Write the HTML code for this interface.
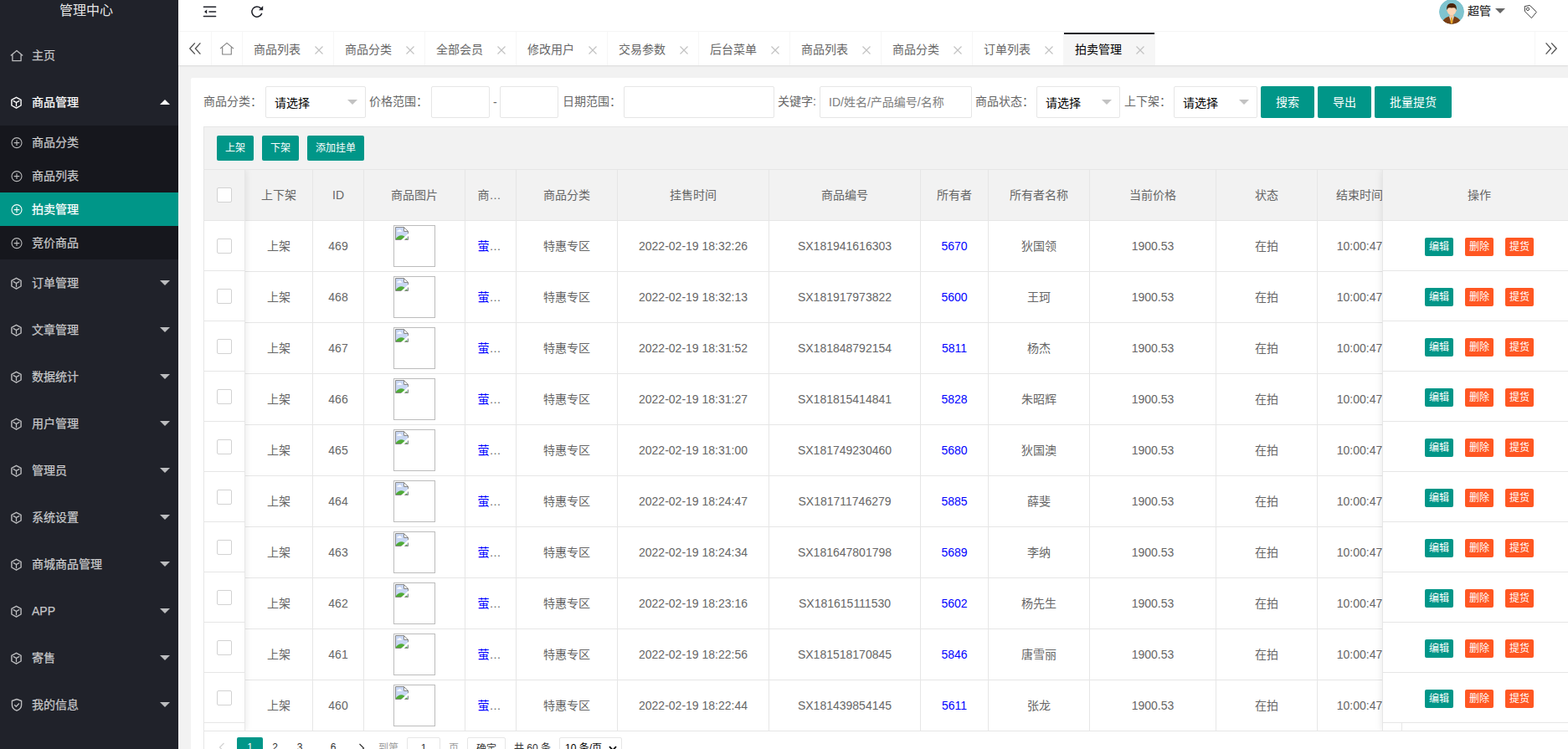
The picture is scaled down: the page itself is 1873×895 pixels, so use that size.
<!DOCTYPE html>
<html lang="zh-CN">
<head>
<meta charset="utf-8">
<title>管理中心</title>
<style>
*{box-sizing:content-box;margin:0;padding:0}
html,body{width:1873px;height:895px;overflow:hidden}
body{position:relative;background:#f2f2f2;font:14px/1 "Liberation Sans","Noto Sans CJK SC",sans-serif;color:#666}
div,span,a,i,label,svg{position:absolute;display:block;white-space:nowrap}
a{text-decoration:none}
i{font-style:normal}
.ic{overflow:visible}
/* card */
.card{left:228px;top:93px;width:1700px;height:900px;background:#fff;border-radius:2px}
.form{left:0;top:103px;width:1873px;height:38px}
.lb{top:0;height:38px;line-height:37px;color:#666}
.in{top:0;height:36px;border:1px solid #e6e6e6;border-radius:2px;background:#fff}
.ph{left:10px;top:0;line-height:36px;color:#7d7d7d}
.sv{left:10px;top:0;line-height:38px;color:#000}
.edge{right:9px;top:15px;width:0;height:0;border:6px solid transparent;border-top-color:#c2c2c2;border-bottom-width:0}
.dash{left:589px;top:0;line-height:39px;color:#666}
.btn{top:0;height:38px;line-height:38px;background:#009688;color:#fff;border-radius:2px;text-align:center}
.tool{left:243px;top:151px;width:1700px;height:50px;border:1px solid #e6e6e6;background:#f2f2f2}
.btn.sm{top:10px;height:30px;line-height:30px;font-size:12px}
/* table */
.tmain{left:244px;top:203px;width:1700px;height:671px;background:#fff;border-bottom:0}
.thead{left:0;top:0;width:1700px;height:60px;background:#f2f2f2;border-bottom:1px solid #e6e6e6}
.th{top:0;height:60px;border-right:1px solid #e6e6e6;line-height:60px;text-align:center;color:#666}
.th span,.td span,.td a{position:static;display:inline}
.tr{left:0;width:1700px;height:60px;border-bottom:1px solid #e6e6e6}
.td{top:0;height:60px;border-right:1px solid #e6e6e6;line-height:60px;text-align:center;color:#666}
.td .img{position:absolute;display:block;left:35px;top:5px;width:48px;height:48px;border:1px solid #bcbcbc}
.td .img svg{left:1px;top:1px}
.lk{color:#0000ff}
.fixl{left:244px;top:203px;width:48px;height:671px;border-right:1px solid #e6e6e6;background:#fff;box-shadow:1px 0 8px rgba(0,0,0,.08);clip-path:inset(0 -12px 0 0)}
.view{left:243px;top:151px;width:1px;height:760px;background:#e6e6e6}
.fixr{left:1651px;top:203px;width:240px;height:671px;border-left:1px solid #e6e6e6;background:transparent;box-shadow:-1px 0 8px rgba(0,0,0,.08);clip-path:inset(0 0 0 -12px)}
.fh{left:0;top:0;width:100%;height:60px;background:#f2f2f2;border-bottom:1px solid #e6e6e6;line-height:60px;text-align:center}
.fixr .fh{width:230px}
.fixr .fh span{position:static;display:inline}
.fr{left:0;width:100%;height:59px;border-bottom:1px solid #e6e6e6;background:#fff}
.fixl{background:transparent}
.cb{left:15px;top:21px;width:16px;height:16px;border:1px solid #d2d2d2;border-radius:2px;background:#fff}
.fr .cb{top:21px}
.xs{top:20px;height:22px;line-height:22px;width:34px;text-align:center;color:#fff;font-size:12px;border-radius:2px}
.xs.g{background:#009688}
.xs.o{background:#ff5722}
.fr .xs:nth-child(1){left:50px}
.fr .xs:nth-child(2){left:98px}
.fr .xs:nth-child(3){left:146px}
.stubl{left:292px;top:864px;width:1px;height:10px;background:#e6e6e6}
/* pagination */
.page{left:243px;top:873px;width:1700px;height:40px;border:1px solid #e6e6e6;border-top:1px solid #e6e6e6;background:#fff;font-size:12px}
.page .ic{color:#d2d2d2}
.pgi{left:-244px;top:-874px;width:10px;height:10px}
.pgi>span,.pgi>a{top:881px;height:26px;line-height:25px}

.cur{background:#009688;color:#fff;text-align:center;border-radius:2px}
.pn{color:#333;text-align:center}
.pt{color:#999;line-height:27px !important}
.pin{height:24px !important;line-height:25px !important;border:1px solid #e6e6e6;border-radius:2px;text-align:center;color:#333}
.pbtn{height:24px !important;line-height:27px !important;border:1px solid #e6e6e6;border-radius:2px;text-align:center;color:#333}
.psel{height:24px !important;line-height:25px !important;border:1px solid #e6e6e6;border-radius:2px;color:#000;text-indent:6px}
.psel svg{right:5px;top:9px}
/* header */
.hd{left:213px;top:0;width:1660px;height:37px;background:#fff;border-bottom:1px solid #f6f6f6;color:#333}
.hd .ic{color:#20222a}
.hd .ic:last-child{color:#444}
.ava{left:1506px;top:-1px;width:30px;height:30px;border-radius:50%;overflow:hidden}
.uname{left:1540px;top:0;line-height:26px;color:#262626;-webkit-text-stroke:0.2px #262626}
.caret{left:1573px;top:10px;width:0;height:0;border:6px solid transparent;border-top-color:#666;border-bottom-width:0}
/* tabs */
.tabs{left:213px;top:38px;width:1660px;height:40px;background:#fff;box-shadow:0 1px 2px 0 rgba(0,0,0,.1)}
.tctl{top:0;height:40px;background:#fff;color:#555}
.tab{top:0;height:40px;border-right:1px solid #f6f6f6;line-height:43px;color:#666}
.tab span{left:13px;top:0}
.tab .ic{color:#c2c2c2}
.tab:not(.act) > .ic:only-child{color:#808080}
.tab.act{background:#f6f6f6;color:#000}
.tab.act:before{content:"";position:absolute;left:0;top:1px;width:100%;height:2px;background:#20222a}
/* side */
.side{left:0;top:0;width:213px;height:895px;background:#20222a}
.logo{left:0;top:-12px;width:206px;height:50px;line-height:49px;text-align:center;color:rgba(255,255,255,.9);font-size:16px}
.mi{left:0;width:213px;height:56px;line-height:56px;color:rgba(255,255,255,.7)}
.mi span,.si span{left:38px;top:0;-webkit-text-stroke:0.25px currentColor}
.mi.on{color:#fff}
.ar{right:10px;width:0;height:0;border:6px solid transparent}
.ar.down{top:25px;border-top-color:rgba(255,255,255,.7);border-bottom-width:0}
.ar.up{top:25px;border-bottom-color:#fff;border-top-width:0}
.subbg{left:0;top:150px;width:213px;height:160px;background:rgba(0,0,0,.3)}
.si{left:0;width:213px;height:40px;line-height:40px;color:rgba(255,255,255,.7)}
.si.this{background:#009688;color:#fff}

.td .ell,.th .ell{position:absolute;display:block;left:14.5px;top:0}

</style>
</head>
<body>
<div class="card"></div>
<div class="view"></div>
<div class="form">
<label class="lb" style="left:243px">商品分类：</label>
<div class="in sel" style="left:317px;width:118px"><span class="sv">请选择</span><i class="edge"></i></div>
<label class="lb" style="left:441px">价格范围：</label>
<div class="in" style="left:515px;width:68px"></div>
<span class="dash">-</span>
<div class="in" style="left:597px;width:68px"></div>
<label class="lb" style="left:672px">日期范围：</label>
<div class="in" style="left:745px;width:178px"></div>
<label class="lb" style="left:929px">关键字:</label>
<div class="in" style="left:979px;width:180px"><span class="ph">ID/姓名/产品编号/名称</span></div>
<label class="lb" style="left:1165px">商品状态：</label>
<div class="in sel" style="left:1238px;width:98px"><span class="sv">请选择</span><i class="edge"></i></div>
<label class="lb" style="left:1343px">上下架：</label>
<div class="in sel" style="left:1402px;width:98px"><span class="sv">请选择</span><i class="edge"></i></div>
<a class="btn" style="left:1506px;width:64px">搜索</a>
<a class="btn" style="left:1574px;width:64px">导出</a>
<a class="btn" style="left:1642px;width:92px">批量提货</a>
</div>
<div class="tool">
<a class="btn sm" style="left:15px;width:44px">上架</a>
<a class="btn sm" style="left:69px;width:44px">下架</a>
<a class="btn sm" style="left:123px;width:68px">添加挂单</a>
</div>
<div class="tmain">
<div class="thead">
<div class="th" style="left:0px;width:48px"></div>
<div class="th" style="left:49px;width:80px"><span>上下架</span></div>
<div class="th" style="left:130px;width:60px"><span>ID</span></div>
<div class="th" style="left:191px;width:120px"><span>商品图片</span></div>
<div class="th" style="left:312px;width:60px"><span class="ell">商…</span></div>
<div class="th" style="left:373px;width:120px"><span>商品分类</span></div>
<div class="th" style="left:494px;width:180px"><span>挂售时间</span></div>
<div class="th" style="left:675px;width:180px"><span>商品编号</span></div>
<div class="th" style="left:856px;width:80px"><span>所有者</span></div>
<div class="th" style="left:937px;width:120px"><span>所有者名称</span></div>
<div class="th" style="left:1058px;width:150px"><span>当前价格</span></div>
<div class="th" style="left:1209px;width:120px"><span>状态</span></div>
<div class="th" style="left:1330px;width:100px"><span>结束时间</span></div>
<div class="th" style="left:1431px;width:229px;border-right:0"><span>操作</span></div>
</div>
<div class="tr" style="top:61px">
<div class="td" style="left:0px;width:48px"></div>
<div class="td" style="left:49px;width:80px"><span>上架</span></div>
<div class="td" style="left:130px;width:60px"><span>469</span></div>
<div class="td" style="left:191px;width:120px"><span class="img"><svg width="16" height="16" viewBox="0 0 16 16"><path d="M0.5 0.5H10.5L15.5 5.5V15.5H0.5Z" fill="#c9d7f3" stroke="#8a8a8a"/><path d="M10.5 0.5V5.5H15.5Z" fill="#fff" stroke="#8a8a8a"/><path d="M1 15V14C3.500 10.200 8 9 11 11.500L15 15Z" fill="#4fab36"/><path d="M2.300 5.800C2.300 4.600 3.300 4.200 4.100 4.400 4.500 3 6.500 3 7 4.400 7.800 4.300 8.300 5 8.200 5.800Z" fill="#fff"/><path d="M6.300 16.600 16.600 7.200V10.500L10.100 16.600Z" fill="#fff"/></svg></span></div>
<div class="td" style="left:312px;width:60px"><span class="ell"><a class="lk">萤</a>…</span></div>
<div class="td" style="left:373px;width:120px"><span>特惠专区</span></div>
<div class="td" style="left:494px;width:180px"><span>2022-02-19 18:32:26</span></div>
<div class="td" style="left:675px;width:180px"><span>SX181941616303</span></div>
<div class="td" style="left:856px;width:80px"><a class="lk">5670</a></div>
<div class="td" style="left:937px;width:120px"><span>狄国领</span></div>
<div class="td" style="left:1058px;width:150px"><span>1900.53</span></div>
<div class="td" style="left:1209px;width:120px"><span>在拍</span></div>
<div class="td" style="left:1330px;width:100px"><span>10:00:47</span></div>
</div>
<div class="tr" style="top:122px">
<div class="td" style="left:0px;width:48px"></div>
<div class="td" style="left:49px;width:80px"><span>上架</span></div>
<div class="td" style="left:130px;width:60px"><span>468</span></div>
<div class="td" style="left:191px;width:120px"><span class="img"><svg width="16" height="16" viewBox="0 0 16 16"><path d="M0.5 0.5H10.5L15.5 5.5V15.5H0.5Z" fill="#c9d7f3" stroke="#8a8a8a"/><path d="M10.5 0.5V5.5H15.5Z" fill="#fff" stroke="#8a8a8a"/><path d="M1 15V14C3.500 10.200 8 9 11 11.500L15 15Z" fill="#4fab36"/><path d="M2.300 5.800C2.300 4.600 3.300 4.200 4.100 4.400 4.500 3 6.500 3 7 4.400 7.800 4.300 8.300 5 8.200 5.800Z" fill="#fff"/><path d="M6.300 16.600 16.600 7.200V10.500L10.100 16.600Z" fill="#fff"/></svg></span></div>
<div class="td" style="left:312px;width:60px"><span class="ell"><a class="lk">萤</a>…</span></div>
<div class="td" style="left:373px;width:120px"><span>特惠专区</span></div>
<div class="td" style="left:494px;width:180px"><span>2022-02-19 18:32:13</span></div>
<div class="td" style="left:675px;width:180px"><span>SX181917973822</span></div>
<div class="td" style="left:856px;width:80px"><a class="lk">5600</a></div>
<div class="td" style="left:937px;width:120px"><span>王珂</span></div>
<div class="td" style="left:1058px;width:150px"><span>1900.53</span></div>
<div class="td" style="left:1209px;width:120px"><span>在拍</span></div>
<div class="td" style="left:1330px;width:100px"><span>10:00:47</span></div>
</div>
<div class="tr" style="top:183px">
<div class="td" style="left:0px;width:48px"></div>
<div class="td" style="left:49px;width:80px"><span>上架</span></div>
<div class="td" style="left:130px;width:60px"><span>467</span></div>
<div class="td" style="left:191px;width:120px"><span class="img"><svg width="16" height="16" viewBox="0 0 16 16"><path d="M0.5 0.5H10.5L15.5 5.5V15.5H0.5Z" fill="#c9d7f3" stroke="#8a8a8a"/><path d="M10.5 0.5V5.5H15.5Z" fill="#fff" stroke="#8a8a8a"/><path d="M1 15V14C3.500 10.200 8 9 11 11.500L15 15Z" fill="#4fab36"/><path d="M2.300 5.800C2.300 4.600 3.300 4.200 4.100 4.400 4.500 3 6.500 3 7 4.400 7.800 4.300 8.300 5 8.200 5.800Z" fill="#fff"/><path d="M6.300 16.600 16.600 7.200V10.500L10.100 16.600Z" fill="#fff"/></svg></span></div>
<div class="td" style="left:312px;width:60px"><span class="ell"><a class="lk">萤</a>…</span></div>
<div class="td" style="left:373px;width:120px"><span>特惠专区</span></div>
<div class="td" style="left:494px;width:180px"><span>2022-02-19 18:31:52</span></div>
<div class="td" style="left:675px;width:180px"><span>SX181848792154</span></div>
<div class="td" style="left:856px;width:80px"><a class="lk">5811</a></div>
<div class="td" style="left:937px;width:120px"><span>杨杰</span></div>
<div class="td" style="left:1058px;width:150px"><span>1900.53</span></div>
<div class="td" style="left:1209px;width:120px"><span>在拍</span></div>
<div class="td" style="left:1330px;width:100px"><span>10:00:47</span></div>
</div>
<div class="tr" style="top:244px">
<div class="td" style="left:0px;width:48px"></div>
<div class="td" style="left:49px;width:80px"><span>上架</span></div>
<div class="td" style="left:130px;width:60px"><span>466</span></div>
<div class="td" style="left:191px;width:120px"><span class="img"><svg width="16" height="16" viewBox="0 0 16 16"><path d="M0.5 0.5H10.5L15.5 5.5V15.5H0.5Z" fill="#c9d7f3" stroke="#8a8a8a"/><path d="M10.5 0.5V5.5H15.5Z" fill="#fff" stroke="#8a8a8a"/><path d="M1 15V14C3.500 10.200 8 9 11 11.500L15 15Z" fill="#4fab36"/><path d="M2.300 5.800C2.300 4.600 3.300 4.200 4.100 4.400 4.500 3 6.500 3 7 4.400 7.800 4.300 8.300 5 8.200 5.800Z" fill="#fff"/><path d="M6.300 16.600 16.600 7.200V10.500L10.100 16.600Z" fill="#fff"/></svg></span></div>
<div class="td" style="left:312px;width:60px"><span class="ell"><a class="lk">萤</a>…</span></div>
<div class="td" style="left:373px;width:120px"><span>特惠专区</span></div>
<div class="td" style="left:494px;width:180px"><span>2022-02-19 18:31:27</span></div>
<div class="td" style="left:675px;width:180px"><span>SX181815414841</span></div>
<div class="td" style="left:856px;width:80px"><a class="lk">5828</a></div>
<div class="td" style="left:937px;width:120px"><span>朱昭辉</span></div>
<div class="td" style="left:1058px;width:150px"><span>1900.53</span></div>
<div class="td" style="left:1209px;width:120px"><span>在拍</span></div>
<div class="td" style="left:1330px;width:100px"><span>10:00:47</span></div>
</div>
<div class="tr" style="top:305px">
<div class="td" style="left:0px;width:48px"></div>
<div class="td" style="left:49px;width:80px"><span>上架</span></div>
<div class="td" style="left:130px;width:60px"><span>465</span></div>
<div class="td" style="left:191px;width:120px"><span class="img"><svg width="16" height="16" viewBox="0 0 16 16"><path d="M0.5 0.5H10.5L15.5 5.5V15.5H0.5Z" fill="#c9d7f3" stroke="#8a8a8a"/><path d="M10.5 0.5V5.5H15.5Z" fill="#fff" stroke="#8a8a8a"/><path d="M1 15V14C3.500 10.200 8 9 11 11.500L15 15Z" fill="#4fab36"/><path d="M2.300 5.800C2.300 4.600 3.300 4.200 4.100 4.400 4.500 3 6.500 3 7 4.400 7.800 4.300 8.300 5 8.200 5.800Z" fill="#fff"/><path d="M6.300 16.600 16.600 7.200V10.500L10.100 16.600Z" fill="#fff"/></svg></span></div>
<div class="td" style="left:312px;width:60px"><span class="ell"><a class="lk">萤</a>…</span></div>
<div class="td" style="left:373px;width:120px"><span>特惠专区</span></div>
<div class="td" style="left:494px;width:180px"><span>2022-02-19 18:31:00</span></div>
<div class="td" style="left:675px;width:180px"><span>SX181749230460</span></div>
<div class="td" style="left:856px;width:80px"><a class="lk">5680</a></div>
<div class="td" style="left:937px;width:120px"><span>狄国澳</span></div>
<div class="td" style="left:1058px;width:150px"><span>1900.53</span></div>
<div class="td" style="left:1209px;width:120px"><span>在拍</span></div>
<div class="td" style="left:1330px;width:100px"><span>10:00:47</span></div>
</div>
<div class="tr" style="top:366px">
<div class="td" style="left:0px;width:48px"></div>
<div class="td" style="left:49px;width:80px"><span>上架</span></div>
<div class="td" style="left:130px;width:60px"><span>464</span></div>
<div class="td" style="left:191px;width:120px"><span class="img"><svg width="16" height="16" viewBox="0 0 16 16"><path d="M0.5 0.5H10.5L15.5 5.5V15.5H0.5Z" fill="#c9d7f3" stroke="#8a8a8a"/><path d="M10.5 0.5V5.5H15.5Z" fill="#fff" stroke="#8a8a8a"/><path d="M1 15V14C3.500 10.200 8 9 11 11.500L15 15Z" fill="#4fab36"/><path d="M2.300 5.800C2.300 4.600 3.300 4.200 4.100 4.400 4.500 3 6.500 3 7 4.400 7.800 4.300 8.300 5 8.200 5.800Z" fill="#fff"/><path d="M6.300 16.600 16.600 7.200V10.500L10.100 16.600Z" fill="#fff"/></svg></span></div>
<div class="td" style="left:312px;width:60px"><span class="ell"><a class="lk">萤</a>…</span></div>
<div class="td" style="left:373px;width:120px"><span>特惠专区</span></div>
<div class="td" style="left:494px;width:180px"><span>2022-02-19 18:24:47</span></div>
<div class="td" style="left:675px;width:180px"><span>SX181711746279</span></div>
<div class="td" style="left:856px;width:80px"><a class="lk">5885</a></div>
<div class="td" style="left:937px;width:120px"><span>薛斐</span></div>
<div class="td" style="left:1058px;width:150px"><span>1900.53</span></div>
<div class="td" style="left:1209px;width:120px"><span>在拍</span></div>
<div class="td" style="left:1330px;width:100px"><span>10:00:47</span></div>
</div>
<div class="tr" style="top:427px">
<div class="td" style="left:0px;width:48px"></div>
<div class="td" style="left:49px;width:80px"><span>上架</span></div>
<div class="td" style="left:130px;width:60px"><span>463</span></div>
<div class="td" style="left:191px;width:120px"><span class="img"><svg width="16" height="16" viewBox="0 0 16 16"><path d="M0.5 0.5H10.5L15.5 5.5V15.5H0.5Z" fill="#c9d7f3" stroke="#8a8a8a"/><path d="M10.5 0.5V5.5H15.5Z" fill="#fff" stroke="#8a8a8a"/><path d="M1 15V14C3.500 10.200 8 9 11 11.500L15 15Z" fill="#4fab36"/><path d="M2.300 5.800C2.300 4.600 3.300 4.200 4.100 4.400 4.500 3 6.500 3 7 4.400 7.800 4.300 8.300 5 8.200 5.800Z" fill="#fff"/><path d="M6.300 16.600 16.600 7.200V10.500L10.100 16.600Z" fill="#fff"/></svg></span></div>
<div class="td" style="left:312px;width:60px"><span class="ell"><a class="lk">萤</a>…</span></div>
<div class="td" style="left:373px;width:120px"><span>特惠专区</span></div>
<div class="td" style="left:494px;width:180px"><span>2022-02-19 18:24:34</span></div>
<div class="td" style="left:675px;width:180px"><span>SX181647801798</span></div>
<div class="td" style="left:856px;width:80px"><a class="lk">5689</a></div>
<div class="td" style="left:937px;width:120px"><span>李纳</span></div>
<div class="td" style="left:1058px;width:150px"><span>1900.53</span></div>
<div class="td" style="left:1209px;width:120px"><span>在拍</span></div>
<div class="td" style="left:1330px;width:100px"><span>10:00:47</span></div>
</div>
<div class="tr" style="top:488px">
<div class="td" style="left:0px;width:48px"></div>
<div class="td" style="left:49px;width:80px"><span>上架</span></div>
<div class="td" style="left:130px;width:60px"><span>462</span></div>
<div class="td" style="left:191px;width:120px"><span class="img"><svg width="16" height="16" viewBox="0 0 16 16"><path d="M0.5 0.5H10.5L15.5 5.5V15.5H0.5Z" fill="#c9d7f3" stroke="#8a8a8a"/><path d="M10.5 0.5V5.5H15.5Z" fill="#fff" stroke="#8a8a8a"/><path d="M1 15V14C3.500 10.200 8 9 11 11.500L15 15Z" fill="#4fab36"/><path d="M2.300 5.800C2.300 4.600 3.300 4.200 4.100 4.400 4.500 3 6.500 3 7 4.400 7.800 4.300 8.300 5 8.200 5.800Z" fill="#fff"/><path d="M6.300 16.600 16.600 7.200V10.500L10.100 16.600Z" fill="#fff"/></svg></span></div>
<div class="td" style="left:312px;width:60px"><span class="ell"><a class="lk">萤</a>…</span></div>
<div class="td" style="left:373px;width:120px"><span>特惠专区</span></div>
<div class="td" style="left:494px;width:180px"><span>2022-02-19 18:23:16</span></div>
<div class="td" style="left:675px;width:180px"><span>SX181615111530</span></div>
<div class="td" style="left:856px;width:80px"><a class="lk">5602</a></div>
<div class="td" style="left:937px;width:120px"><span>杨先生</span></div>
<div class="td" style="left:1058px;width:150px"><span>1900.53</span></div>
<div class="td" style="left:1209px;width:120px"><span>在拍</span></div>
<div class="td" style="left:1330px;width:100px"><span>10:00:47</span></div>
</div>
<div class="tr" style="top:549px">
<div class="td" style="left:0px;width:48px"></div>
<div class="td" style="left:49px;width:80px"><span>上架</span></div>
<div class="td" style="left:130px;width:60px"><span>461</span></div>
<div class="td" style="left:191px;width:120px"><span class="img"><svg width="16" height="16" viewBox="0 0 16 16"><path d="M0.5 0.5H10.5L15.5 5.5V15.5H0.5Z" fill="#c9d7f3" stroke="#8a8a8a"/><path d="M10.5 0.5V5.5H15.5Z" fill="#fff" stroke="#8a8a8a"/><path d="M1 15V14C3.500 10.200 8 9 11 11.500L15 15Z" fill="#4fab36"/><path d="M2.300 5.800C2.300 4.600 3.300 4.200 4.100 4.400 4.500 3 6.500 3 7 4.400 7.800 4.300 8.300 5 8.200 5.800Z" fill="#fff"/><path d="M6.300 16.600 16.600 7.200V10.500L10.100 16.600Z" fill="#fff"/></svg></span></div>
<div class="td" style="left:312px;width:60px"><span class="ell"><a class="lk">萤</a>…</span></div>
<div class="td" style="left:373px;width:120px"><span>特惠专区</span></div>
<div class="td" style="left:494px;width:180px"><span>2022-02-19 18:22:56</span></div>
<div class="td" style="left:675px;width:180px"><span>SX181518170845</span></div>
<div class="td" style="left:856px;width:80px"><a class="lk">5846</a></div>
<div class="td" style="left:937px;width:120px"><span>唐雪丽</span></div>
<div class="td" style="left:1058px;width:150px"><span>1900.53</span></div>
<div class="td" style="left:1209px;width:120px"><span>在拍</span></div>
<div class="td" style="left:1330px;width:100px"><span>10:00:47</span></div>
</div>
<div class="tr" style="top:610px">
<div class="td" style="left:0px;width:48px"></div>
<div class="td" style="left:49px;width:80px"><span>上架</span></div>
<div class="td" style="left:130px;width:60px"><span>460</span></div>
<div class="td" style="left:191px;width:120px"><span class="img"><svg width="16" height="16" viewBox="0 0 16 16"><path d="M0.5 0.5H10.5L15.5 5.5V15.5H0.5Z" fill="#c9d7f3" stroke="#8a8a8a"/><path d="M10.5 0.5V5.5H15.5Z" fill="#fff" stroke="#8a8a8a"/><path d="M1 15V14C3.500 10.200 8 9 11 11.500L15 15Z" fill="#4fab36"/><path d="M2.300 5.800C2.300 4.600 3.300 4.200 4.100 4.400 4.500 3 6.500 3 7 4.400 7.800 4.300 8.300 5 8.200 5.800Z" fill="#fff"/><path d="M6.300 16.600 16.600 7.200V10.500L10.100 16.600Z" fill="#fff"/></svg></span></div>
<div class="td" style="left:312px;width:60px"><span class="ell"><a class="lk">萤</a>…</span></div>
<div class="td" style="left:373px;width:120px"><span>特惠专区</span></div>
<div class="td" style="left:494px;width:180px"><span>2022-02-19 18:22:44</span></div>
<div class="td" style="left:675px;width:180px"><span>SX181439854145</span></div>
<div class="td" style="left:856px;width:80px"><a class="lk">5611</a></div>
<div class="td" style="left:937px;width:120px"><span>张龙</span></div>
<div class="td" style="left:1058px;width:150px"><span>1900.53</span></div>
<div class="td" style="left:1209px;width:120px"><span>在拍</span></div>
<div class="td" style="left:1330px;width:100px"><span>10:00:47</span></div>
</div>
</div>
<div class="fixl">
<div class="fh"><i class="cb"></i></div>
<div class="fr" style="top:61px"><i class="cb"></i></div>
<div class="fr" style="top:121px"><i class="cb"></i></div>
<div class="fr" style="top:181px"><i class="cb"></i></div>
<div class="fr" style="top:241px"><i class="cb"></i></div>
<div class="fr" style="top:301px"><i class="cb"></i></div>
<div class="fr" style="top:361px"><i class="cb"></i></div>
<div class="fr" style="top:421px"><i class="cb"></i></div>
<div class="fr" style="top:481px"><i class="cb"></i></div>
<div class="fr" style="top:541px"><i class="cb"></i></div>
<div class="fr" style="top:601px"><i class="cb"></i></div>
</div>
<div class="fixr">
<div class="fh"><span>操作</span></div>
<div class="fr" style="top:61px"><a class="xs g">编辑</a><a class="xs o">删除</a><a class="xs o">提货</a></div>
<div class="fr" style="top:121px"><a class="xs g">编辑</a><a class="xs o">删除</a><a class="xs o">提货</a></div>
<div class="fr" style="top:181px"><a class="xs g">编辑</a><a class="xs o">删除</a><a class="xs o">提货</a></div>
<div class="fr" style="top:241px"><a class="xs g">编辑</a><a class="xs o">删除</a><a class="xs o">提货</a></div>
<div class="fr" style="top:301px"><a class="xs g">编辑</a><a class="xs o">删除</a><a class="xs o">提货</a></div>
<div class="fr" style="top:361px"><a class="xs g">编辑</a><a class="xs o">删除</a><a class="xs o">提货</a></div>
<div class="fr" style="top:421px"><a class="xs g">编辑</a><a class="xs o">删除</a><a class="xs o">提货</a></div>
<div class="fr" style="top:481px"><a class="xs g">编辑</a><a class="xs o">删除</a><a class="xs o">提货</a></div>
<div class="fr" style="top:541px"><a class="xs g">编辑</a><a class="xs o">删除</a><a class="xs o">提货</a></div>
<div class="fr" style="top:601px"><a class="xs g">编辑</a><a class="xs o">删除</a><a class="xs o">提货</a></div>
</div>
<div class="page"><div class="pgi">
<svg class="ic" style="left:260.5px;top:887px" width="8" height="12" viewBox="0 0 8 12"><path d="M6.5 1 1.5 6 6.5 11" fill="none" stroke="currentColor" stroke-width="1.2"/></svg><span class="cur" style="left:283px;width:31px">1</span>
<a class="pn" style="left:314px;width:29px">2</a>
<a class="pn" style="left:343px;width:30px">3</a>
<span class="pn" style="left:373px;width:10px">…</span>
<a class="pn" style="left:383px;width:30px">6</a>
<svg class="ic" style="left:428px;top:887.5px" width="8" height="12" viewBox="0 0 8 12"><path d="M1.5 1 6.5 6 1.5 11" fill="none" stroke="#333" stroke-width="1.2"/></svg><span class="pt" style="left:452px">到第</span>
<span class="pin" style="left:486px;width:38px">1</span>
<span class="pt" style="left:536px">页</span>
<span class="pbtn" style="left:558px;width:44px">确定</span>
<span class="pt" style="left:614px;color:#333">共 60 条</span>
<span class="psel" style="left:668px;width:73px">10 条/页<svg width="10" height="7" viewBox="0 0 10 7"><path d="M1 1.2 5 5.4 9 1.2" fill="none" stroke="#000" stroke-width="1.8"/></svg></span>
</div></div>
<div class="hd">
<svg class="ic" style="left:30px;top:7px" width="15" height="14" viewBox="0 0 15 14"><path d="M0.4 1.3H14.6M7 6.9H14.6M0.4 12.5H14.6" fill="none" stroke="currentColor" stroke-width="1.5" stroke-linecap="round"/><path d="M1 6.9 4.2 4.4V9.4Z" fill="currentColor"/></svg><svg class="ic" style="left:87px;top:6px" width="15" height="15" viewBox="0 0 15 15"><path d="M12.6 10.4A6.1 6.1 0 1 1 11.2 3.6" fill="none" stroke="currentColor" stroke-width="1.5" stroke-linecap="round"/><path d="M14.200 1V6.200H9Z" fill="currentColor"/></svg><span class="ava"><svg width="30" height="30" viewBox="0 0 30 30"><circle cx="15" cy="15" r="15" fill="#7fc4cf"/><path d="M4.6 25.6C6.500 22.600 9.500 21.400 12 20.500L15 21.600 18 20.500C20.500 21.400 23.500 22.600 25.400 25.600 22.500 28.900 19 30 15 30S7.500 28.900 4.600 25.600Z" fill="#7a3e14"/><path d="M11.900 20.300 15 30 18.100 20.300Z" fill="#dcd8d2"/><path d="M14.100 21.700H15.900L16.400 27.500 15 30 13.600 27.500Z" fill="#eaa92a"/><rect x="12.800" y="17" width="4.400" height="4.300" fill="#f1c5a0"/><circle cx="9.900" cy="13.600" r="1" fill="#f1c5a0"/><circle cx="20.100" cy="13.600" r="1" fill="#f1c5a0"/><ellipse cx="15" cy="13.900" rx="5.100" ry="5.200" fill="#fcd6b6"/><path d="M9.300 12.900C8.600 7.600 11 5 15 5S21.400 7.600 20.700 12.900L20 11.400C19 10 17.500 10.400 15 10.400S11 10 10 11.400Z" fill="#4a2409"/></svg></span>
<span class="uname">超管</span>
<i class="caret"></i>
<svg class="ic" style="left:1606px;top:5px" width="18" height="18" viewBox="0 0 18 18"><path d="M2.2 2.6 8.4 1.4 16.4 9.4 10.4 16.6 2.6 8.8Z" fill="none" stroke="currentColor" stroke-width="1" stroke-linejoin="round"/><circle cx="6" cy="5.800" r="1.700" fill="none" stroke="currentColor" stroke-width="1"/></svg></div>
<div class="tabs">
<div class="tctl" style="left:0;width:39px;border-right:1px solid #f6f6f6"><svg class="ic" style="left:12.5px;top:13px" width="14" height="14" viewBox="0 0 14 14"><path d="M6.800 0.400 0.800 7 6.800 13.600M13.400 0.400 7.400 7 13.400 13.600" fill="none" stroke="currentColor" stroke-width="1.400"/></svg></div>
<div class="tab" style="left:40px;width:36px"><svg class="ic" style="left:10px;top:11.5px" width="16" height="16" viewBox="0 0 16 16"><path d="M0 8.200 8 1.400 16 8.200M2.700 6.400V15H13.300V6.400" fill="none" stroke="currentColor" stroke-width="1.1" stroke-linejoin="round"/></svg></div>
<div class="tab" style="left:77px;width:108px"><span>商品列表</span><svg class="ic" style="left:86px;top:17px" width="10" height="10" viewBox="0 0 10 10"><path d="M0.5 0.5 9.5 9.5M9.5 0.5 0.5 9.5" fill="none" stroke="currentColor" stroke-width="1.2"/></svg></div>
<div class="tab" style="left:186px;width:108px"><span>商品分类</span><svg class="ic" style="left:86px;top:17px" width="10" height="10" viewBox="0 0 10 10"><path d="M0.5 0.5 9.5 9.5M9.5 0.5 0.5 9.5" fill="none" stroke="currentColor" stroke-width="1.2"/></svg></div>
<div class="tab" style="left:295px;width:108px"><span>全部会员</span><svg class="ic" style="left:86px;top:17px" width="10" height="10" viewBox="0 0 10 10"><path d="M0.5 0.5 9.5 9.5M9.5 0.5 0.5 9.5" fill="none" stroke="currentColor" stroke-width="1.2"/></svg></div>
<div class="tab" style="left:404px;width:108px"><span>修改用户</span><svg class="ic" style="left:86px;top:17px" width="10" height="10" viewBox="0 0 10 10"><path d="M0.5 0.5 9.5 9.5M9.5 0.5 0.5 9.5" fill="none" stroke="currentColor" stroke-width="1.2"/></svg></div>
<div class="tab" style="left:513px;width:108px"><span>交易参数</span><svg class="ic" style="left:86px;top:17px" width="10" height="10" viewBox="0 0 10 10"><path d="M0.5 0.5 9.5 9.5M9.5 0.5 0.5 9.5" fill="none" stroke="currentColor" stroke-width="1.2"/></svg></div>
<div class="tab" style="left:622px;width:108px"><span>后台菜单</span><svg class="ic" style="left:86px;top:17px" width="10" height="10" viewBox="0 0 10 10"><path d="M0.5 0.5 9.5 9.5M9.5 0.5 0.5 9.5" fill="none" stroke="currentColor" stroke-width="1.2"/></svg></div>
<div class="tab" style="left:731px;width:108px"><span>商品列表</span><svg class="ic" style="left:86px;top:17px" width="10" height="10" viewBox="0 0 10 10"><path d="M0.5 0.5 9.5 9.5M9.5 0.5 0.5 9.5" fill="none" stroke="currentColor" stroke-width="1.2"/></svg></div>
<div class="tab" style="left:840px;width:108px"><span>商品分类</span><svg class="ic" style="left:86px;top:17px" width="10" height="10" viewBox="0 0 10 10"><path d="M0.5 0.5 9.5 9.5M9.5 0.5 0.5 9.5" fill="none" stroke="currentColor" stroke-width="1.2"/></svg></div>
<div class="tab" style="left:949px;width:108px"><span>订单列表</span><svg class="ic" style="left:86px;top:17px" width="10" height="10" viewBox="0 0 10 10"><path d="M0.5 0.5 9.5 9.5M9.5 0.5 0.5 9.5" fill="none" stroke="currentColor" stroke-width="1.2"/></svg></div>
<div class="tab act" style="left:1058px;width:108px"><span>拍卖管理</span><svg class="ic" style="left:86px;top:17px" width="10" height="10" viewBox="0 0 10 10"><path d="M0.5 0.5 9.5 9.5M9.5 0.5 0.5 9.5" fill="none" stroke="currentColor" stroke-width="1.2"/></svg></div>
<div class="tctl" style="right:0;width:39px;border-left:1px solid #f6f6f6"><svg class="ic" style="left:12px;top:13px" width="14" height="14" viewBox="0 0 14 14"><path d="M0.600 0.400 6.600 7 0.600 13.600M7.200 0.400 13.200 7 7.200 13.600" fill="none" stroke="currentColor" stroke-width="1.400"/></svg></div>
</div>
<div class="side">
<div class="logo">管理中心</div>
<div class="mi " style="top:38px"><svg class="ic" style="left:11px;top:19px" width="18" height="18" viewBox="0 0 18 18"><g transform="translate(0 0.3)"><path d="M1.8 9.3 9 3.2 16.2 9.3M3.9 8V15.4H14.1V8" fill="none" stroke="currentColor" stroke-width="1.3" stroke-linejoin="round"/></g></svg><span>主页</span></div>
<div class="mi on" style="top:94px"><svg class="ic" style="left:11px;top:19px" width="18" height="18" viewBox="0 0 18 18"><g transform="translate(0 0.3)"><path d="M8.500 3 14.100 6.100V12.700L8.500 15.900 2.900 12.700V6.100Z" fill="none" stroke="currentColor" stroke-width="1.4" stroke-linejoin="round"/><path d="M5.200 7.300 8.500 9.300 11.800 7.300M8.500 9.300V13.400" fill="none" stroke="currentColor" stroke-width="1.3" stroke-linecap="round"/></g></svg><span>商品管理</span><i class="ar up"></i></div>
<div class="subbg"></div>
<div class="si " style="top:150px"><svg class="ic" style="left:11px;top:11px" width="18" height="18" viewBox="0 0 18 18"><circle cx="9" cy="9.600" r="6" fill="none" stroke="currentColor" stroke-width="1.1"/><path d="M5.700 9.600H12.300M9 6.300V12.900" fill="none" stroke="currentColor" stroke-width="1.1"/></svg><span>商品分类</span></div>
<div class="si " style="top:190px"><svg class="ic" style="left:11px;top:11px" width="18" height="18" viewBox="0 0 18 18"><circle cx="9" cy="9.600" r="6" fill="none" stroke="currentColor" stroke-width="1.1"/><path d="M5.700 9.600H12.300M9 6.300V12.900" fill="none" stroke="currentColor" stroke-width="1.1"/></svg><span>商品列表</span></div>
<div class="si this" style="top:230px"><svg class="ic" style="left:11px;top:11px" width="18" height="18" viewBox="0 0 18 18"><circle cx="9" cy="9.600" r="6" fill="none" stroke="currentColor" stroke-width="1.1"/><path d="M5.700 9.600H12.300M9 6.300V12.900" fill="none" stroke="currentColor" stroke-width="1.1"/></svg><span>拍卖管理</span></div>
<div class="si " style="top:270px"><svg class="ic" style="left:11px;top:11px" width="18" height="18" viewBox="0 0 18 18"><circle cx="9" cy="9.600" r="6" fill="none" stroke="currentColor" stroke-width="1.1"/><path d="M5.700 9.600H12.300M9 6.300V12.900" fill="none" stroke="currentColor" stroke-width="1.1"/></svg><span>竞价商品</span></div>
<div class="mi " style="top:310px"><svg class="ic" style="left:11px;top:19px" width="18" height="18" viewBox="0 0 18 18"><g transform="translate(0 0.3)"><path d="M8.500 3 14.100 6.100V12.700L8.500 15.900 2.900 12.700V6.100Z" fill="none" stroke="currentColor" stroke-width="1.4" stroke-linejoin="round"/><path d="M5.200 7.300 8.500 9.300 11.800 7.300M8.500 9.300V13.400" fill="none" stroke="currentColor" stroke-width="1.3" stroke-linecap="round"/></g></svg><span>订单管理</span><i class="ar down"></i></div>
<div class="mi " style="top:366px"><svg class="ic" style="left:11px;top:19px" width="18" height="18" viewBox="0 0 18 18"><g transform="translate(0 0.3)"><path d="M8.500 3 14.100 6.100V12.700L8.500 15.900 2.900 12.700V6.100Z" fill="none" stroke="currentColor" stroke-width="1.4" stroke-linejoin="round"/><path d="M5.200 7.300 8.500 9.300 11.800 7.300M8.500 9.300V13.400" fill="none" stroke="currentColor" stroke-width="1.3" stroke-linecap="round"/></g></svg><span>文章管理</span><i class="ar down"></i></div>
<div class="mi " style="top:422px"><svg class="ic" style="left:11px;top:19px" width="18" height="18" viewBox="0 0 18 18"><g transform="translate(0 0.3)"><path d="M8.500 3 14.100 6.100V12.700L8.500 15.900 2.900 12.700V6.100Z" fill="none" stroke="currentColor" stroke-width="1.4" stroke-linejoin="round"/><path d="M5.200 7.300 8.500 9.300 11.800 7.300M8.500 9.300V13.400" fill="none" stroke="currentColor" stroke-width="1.3" stroke-linecap="round"/></g></svg><span>数据统计</span><i class="ar down"></i></div>
<div class="mi " style="top:478px"><svg class="ic" style="left:11px;top:19px" width="18" height="18" viewBox="0 0 18 18"><g transform="translate(0 0.3)"><path d="M8.500 3 14.100 6.100V12.700L8.500 15.900 2.900 12.700V6.100Z" fill="none" stroke="currentColor" stroke-width="1.4" stroke-linejoin="round"/><path d="M5.200 7.300 8.500 9.300 11.800 7.300M8.500 9.300V13.400" fill="none" stroke="currentColor" stroke-width="1.3" stroke-linecap="round"/></g></svg><span>用户管理</span><i class="ar down"></i></div>
<div class="mi " style="top:534px"><svg class="ic" style="left:11px;top:19px" width="18" height="18" viewBox="0 0 18 18"><g transform="translate(0 0.3)"><path d="M8.500 3 14.100 6.100V12.700L8.500 15.900 2.900 12.700V6.100Z" fill="none" stroke="currentColor" stroke-width="1.4" stroke-linejoin="round"/><path d="M5.200 7.300 8.500 9.300 11.800 7.300M8.500 9.300V13.400" fill="none" stroke="currentColor" stroke-width="1.3" stroke-linecap="round"/></g></svg><span>管理员</span><i class="ar down"></i></div>
<div class="mi " style="top:590px"><svg class="ic" style="left:11px;top:19px" width="18" height="18" viewBox="0 0 18 18"><g transform="translate(0 0.3)"><path d="M8.500 3 14.100 6.100V12.700L8.500 15.900 2.900 12.700V6.100Z" fill="none" stroke="currentColor" stroke-width="1.4" stroke-linejoin="round"/><path d="M5.200 7.300 8.500 9.300 11.800 7.300M8.500 9.300V13.400" fill="none" stroke="currentColor" stroke-width="1.3" stroke-linecap="round"/></g></svg><span>系统设置</span><i class="ar down"></i></div>
<div class="mi " style="top:646px"><svg class="ic" style="left:11px;top:19px" width="18" height="18" viewBox="0 0 18 18"><g transform="translate(0 0.3)"><path d="M8.500 3 14.100 6.100V12.700L8.500 15.900 2.900 12.700V6.100Z" fill="none" stroke="currentColor" stroke-width="1.4" stroke-linejoin="round"/><path d="M5.200 7.300 8.500 9.300 11.800 7.300M8.500 9.300V13.400" fill="none" stroke="currentColor" stroke-width="1.3" stroke-linecap="round"/></g></svg><span>商城商品管理</span><i class="ar down"></i></div>
<div class="mi " style="top:702px"><svg class="ic" style="left:11px;top:19px" width="18" height="18" viewBox="0 0 18 18"><g transform="translate(0 0.3)"><path d="M8.500 3 14.100 6.100V12.700L8.500 15.900 2.900 12.700V6.100Z" fill="none" stroke="currentColor" stroke-width="1.4" stroke-linejoin="round"/><path d="M5.200 7.300 8.500 9.300 11.800 7.300M8.500 9.300V13.400" fill="none" stroke="currentColor" stroke-width="1.3" stroke-linecap="round"/></g></svg><span>APP</span><i class="ar down"></i></div>
<div class="mi " style="top:758px"><svg class="ic" style="left:11px;top:19px" width="18" height="18" viewBox="0 0 18 18"><g transform="translate(0 0.3)"><path d="M8.500 3 14.100 6.100V12.700L8.500 15.900 2.900 12.700V6.100Z" fill="none" stroke="currentColor" stroke-width="1.4" stroke-linejoin="round"/><path d="M5.200 7.300 8.500 9.300 11.800 7.300M8.500 9.300V13.400" fill="none" stroke="currentColor" stroke-width="1.3" stroke-linecap="round"/></g></svg><span>寄售</span><i class="ar down"></i></div>
<div class="mi " style="top:814px"><svg class="ic" style="left:11px;top:19px" width="18" height="18" viewBox="0 0 18 18"><g transform="translate(0 0.3)"><path d="M9 2.2 14.6 4.2V9.2C14.6 12.4 12.2 14.6 9 15.9 5.8 14.6 3.4 12.4 3.4 9.2V4.2Z" fill="none" stroke="currentColor" stroke-width="1.4" stroke-linejoin="round"/><path d="M6.2 9 8.3 11 11.9 7.2" fill="none" stroke="currentColor" stroke-width="1.3"/></g></svg><span>我的信息</span><i class="ar down"></i></div>
</div>
</body>
</html>
